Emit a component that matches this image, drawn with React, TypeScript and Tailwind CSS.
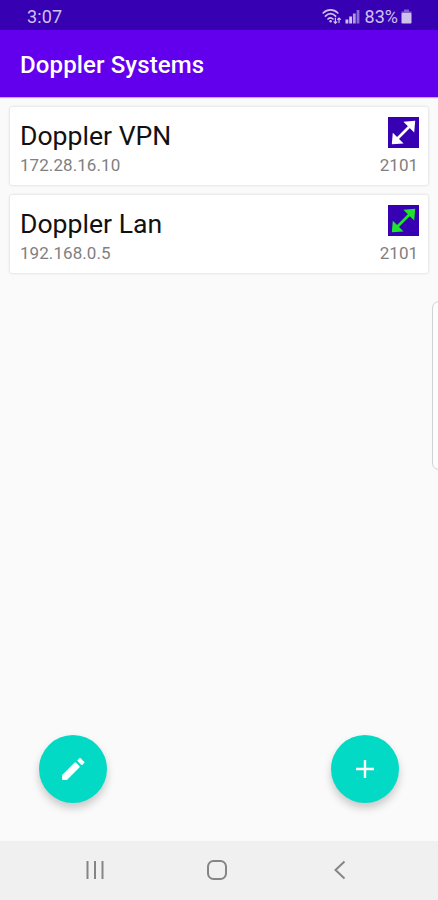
import type { ReactNode } from "react";

type Server = {
  name: string;
  host: string;
  port: number;
  connected: boolean;
};

const servers: Server[] = [
  { name: "Doppler VPN", host: "172.28.16.10", port: 2101, connected: false },
  { name: "Doppler Lan", host: "192.168.0.5", port: 2101, connected: true },
];

function WifiIcon() {
  return (
    <svg width="20" height="17" viewBox="0 0 20 17" fill="none" stroke="currentColor" strokeLinecap="round">
      <path d="M1.2 5C5.5 0.9 11.5 0.9 15.8 5" strokeWidth="1.7" />
      <path d="M3.4 8.2C6.6 5 10.4 5 13.6 8.2" strokeWidth="1.7" />
      <path d="M6 11C7.7 9.4 9.4 9.4 11 11" strokeWidth="1.7" />
      <circle cx="8.6" cy="13.2" r="1.2" fill="currentColor" stroke="none" />
      <path d="M13.4 10.2v5M12 13.8l1.4 1.5 1.4-1.5M17 14.6V10M15.7 11.4L17 10l1.4 1.4" strokeWidth="1.2" />
    </svg>
  );
}

function SignalIcon() {
  return (
    <svg width="15" height="15" viewBox="0 0 15 15" fill="currentColor">
      <rect x="0.5" y="10.5" width="2.8" height="4" />
      <rect x="4.2" y="7.5" width="2.8" height="7" />
      <rect x="7.9" y="4.5" width="2.8" height="10" opacity="0.8" />
      <rect x="11.6" y="1" width="2.8" height="13.5" opacity="0.55" />
    </svg>
  );
}

function BatteryIcon() {
  return (
    <svg width="11" height="15" viewBox="0 0 11 15" fill="currentColor">
      <path d="M3 0.5h5v2h2.5v2h-10v-2H3z" opacity="0.5" />
      <rect x="0.5" y="4" width="10" height="10.5" rx="0.8" />
    </svg>
  );
}

function LinkIcon({ connected }: { connected: boolean }) {
  return (
    <svg
      width="31"
      height="31"
      viewBox="0 0 31 31"
      className={connected ? "bg-[#3700b3] text-[#1ee52c]" : "bg-[#3700b3] text-white"}
    >
      <path d="M9 22L22 9" stroke="currentColor" strokeWidth="2.6" />
      <path d="M27.2 3.8L26.2 15.4L15.4 4.8ZM3.8 27.2L4.8 15.8L15.6 26.4Z" fill="currentColor" />
    </svg>
  );
}

function ServerCard({ server }: { server: Server }) {
  return (
    <div className="flex h-[78px] justify-between rounded-[2px] bg-white pr-[9px] pl-[10px] shadow-[0_0_3px_rgba(0,0,0,0.18)]">
      <div className="flex flex-col pt-3">
        <span className="text-[26.6px] leading-[34px] text-[#111111]">{server.name}</span>
        <span className="text-[17px] leading-6 tracking-[0.07px] text-[#808080]">{server.host}</span>
      </div>
      <div className="flex flex-col items-end pt-[10px]">
        <LinkIcon connected={server.connected} />
        <span className="mt-[5px] mr-px text-[17px] leading-6 text-[#808080]">{server.port}</span>
      </div>
    </div>
  );
}

function Fab({ label, children }: { label: string; children: ReactNode }) {
  return (
    <button
      aria-label={label}
      className="flex size-[68px] items-center justify-center rounded-full bg-[#03dac5] text-white shadow-[0_5px_8px_rgba(0,0,0,0.2)]"
    >
      {children}
    </button>
  );
}

export default function App() {
  return (
    <div className="relative flex h-[900px] w-[438px] flex-col overflow-hidden bg-[#fafafa] font-[Roboto,sans-serif]">
      {/* Status bar */}
      <div className="flex h-[30px] items-center justify-between bg-[#3700b3] pt-[3px] pr-[26px] pl-[27px] text-[#cfc1ed]">
        <span className="text-[18px] leading-none tracking-[0.1px]">3:07</span>
        <div className="flex items-center">
          <WifiIcon />
          <div className="ml-[3px]">
            <SignalIcon />
          </div>
          <span className="ml-[5px] text-[18px] leading-none">83%</span>
          <div className="ml-[3px]">
            <BatteryIcon />
          </div>
        </div>
      </div>

      {/* App bar */}
      <div className="flex h-[67px] items-center bg-[#6200ee] pt-[3px] pl-5 shadow-[0_1px_1px_rgba(98,0,238,0.35)]">
        <h1 className="text-[24px] leading-8 font-medium tracking-[0.12px] text-white">Doppler Systems</h1>
      </div>

      {/* Servers */}
      <div className="flex flex-1 flex-col gap-[10px] px-[10px] pt-[10px]">
        {servers.map((server) => (
          <ServerCard key={server.name} server={server} />
        ))}
      </div>

      {/* Edge panel handle */}
      <div className="absolute top-[301px] -right-2 h-[169px] w-[14px] rounded-[7px] border-[1.5px] border-[#d2d2d2] bg-[#fdfdfd]" />

      {/* Actions */}
      <div className="flex justify-between pr-[39px] pb-[38px] pl-[39px]">
        <Fab label="Edit">
          <svg width="28" height="28" viewBox="0 0 28 28" fill="currentColor" stroke="currentColor" strokeLinejoin="round">
            <path d="M16.2 8.4L19.6 11.8L7.4 23.9H4.2V20.5Z" strokeWidth="2.2" />
            <path d="M19.4 5.6L21 4L24.4 7.4L22.8 9Z" strokeWidth="2" />
          </svg>
        </Fab>
        <Fab label="Add">
          <svg width="28" height="28" viewBox="0 0 28 28" stroke="currentColor" strokeWidth="2.4">
            <path d="M14 5v18M5 14h18" />
          </svg>
        </Fab>
      </div>

      {/* Navigation bar */}
      <div className="flex h-[59px] items-center bg-[#f0f0f0] pb-[2px] pl-[85px] text-[#858585]">
        <svg width="20" height="20" viewBox="0 0 20 20" fill="none" stroke="currentColor" strokeWidth="2">
          <path d="M2.5 1v18M10 1v18M17.5 1v18" />
        </svg>
        <svg width="20" height="20" viewBox="0 0 20 20" fill="none" stroke="currentColor" strokeWidth="2" className="ml-[102px]">
          <rect x="1" y="1" width="18" height="18" rx="5.5" />
        </svg>
        <svg width="13" height="20" viewBox="0 0 13 20" fill="none" stroke="currentColor" strokeWidth="2" className="ml-[106px]">
          <path d="M11.5 1.5L2.5 10l9 8.5" />
        </svg>
      </div>
    </div>
  );
}
